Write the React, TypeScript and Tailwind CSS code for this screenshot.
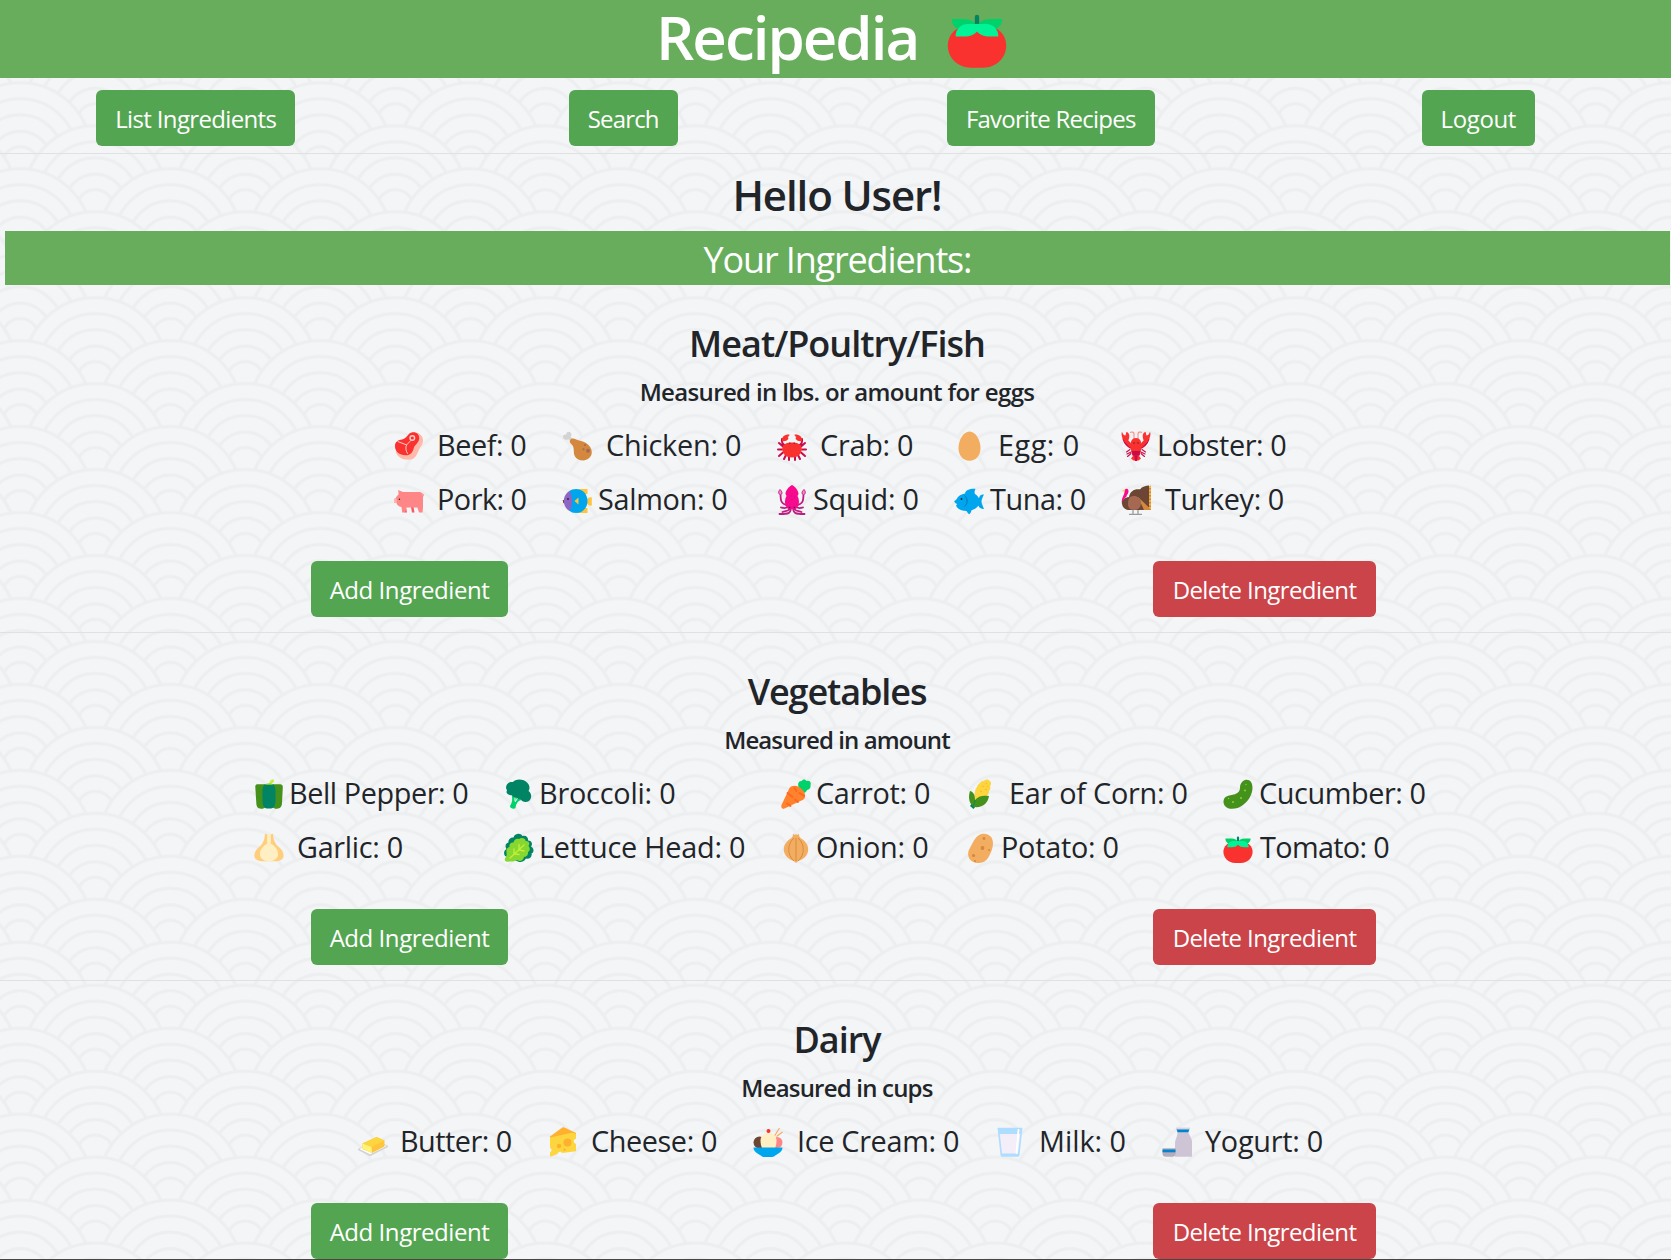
import React from "react";

type Draw = React.ReactNode;

const TOMATO: Draw = (
  <>
    <path d="M.4 18.800C.4 13 5 9.200 9 9.200h12c4 0 8.600 3.800 8.600 9.600C29.600 25 24.500 29.900 18 29.900h-6C5.500 29.900.4 25 .4 18.800Z" fill="#f9312f" />
    <path d="M2.400 5.500h6c3.500 0 5.600 1.500 6.600 4 1-2.500 3.100-4 6.600-4h6C27.600 8.600 25.500 11 21.500 11h-13C4.500 11 2.400 8.600 2.400 5.500Z" fill="#00d26a" />
    <path d="M13.900 4.500a1.100 1.100 0 0 1 2.200 0v6h-2.200Z" fill="#008463" />
    <path d="M4.300 14.200C4.300 10.500 7 8 10.300 8h9.400c3.300 0 6 2.500 6 6.200h-4.400c-3 0-4.800-.8-6.300-2.500-1.500 1.700-3.300 2.500-6.300 2.500Z" fill="#00f397" />
  </>
);

const ICONS: Record<string, Draw> = {
  Tomato: TOMATO,
  Beef: (
    <>
      <path d="M20 1.500c5-.3 8.800 3 9 7.500.2 4-2.300 6.500-4 9.500-1.800 3.300-2.500 10.300-11 10.300-6.500 0-11-3.300-12.200-8C3 12 14 3 20 1.500Z" fill="#ffb9ab" />
      <path d="M18.500 1.300c4-.5 7 2.200 6.700 6.200-.3 4.500-4.500 6.200-5.400 9.500-1 4-3 7.300-8.300 7.300C5.500 24.300.8 20.500 1 15 1.100 10.500 4.500 8.900 8 8.600c5-.6 5.500-6.600 10.500-7.300Z" fill="#f9312f" />
      <path d="M3.700 10.500 12.600 13.900 17 9.300M12.600 13.900c-1.300 2.500-.8 6 1 8.800" fill="none" stroke="#ffcec7" strokeWidth="1" />
      <circle cx="18.300" cy="7" r="2.300" fill="#f9312f" stroke="#ffcec7" strokeWidth="1.400" />
    </>
  ),
  Chicken: (
    <>
      <path d="M1.200 6.700C.2 4.200 3 3 4.300 3.700 3.900.8 7 .1 8.600 1.500c1.600 1.600.8 3.200 0 4.200l2.600 2.800-2.300 2.200-2.500-2.500c-2 1.200-4.600.5-5.200-1.500Z" fill="#d3d3d3" />
      <path d="M8.300 8.800c1-1.300 3.200-1.800 4.800-.8 3 1.500 7 1.600 10.500 3.800 4 2.500 6.200 5.500 6.200 9.500 0 4.500-4 8.200-9 8.200-5.500 0-9-3.500-9-9 0-3.500-.3-5.400-2.500-7.500-1.500-1.200-2-2.700-1-4.200Z" fill="#d3883e" />
      <circle cx="23" cy="14" r="1.100" fill="#a56953" /><circle cx="21.500" cy="18.300" r="1" fill="#a56953" /><circle cx="26" cy="19.700" r="2" fill="#a56953" />
    </>
  ),
  Crab: (
    <>
      <g fill="none" stroke="#ca0b4a" strokeWidth="2" strokeLinecap="round">
        <path d="M6 15.500 2 12M5 18.500H1M6 21.500l-4 3.500M9 24l-2 4M12 25.500v3.500M24 15.500l4-3.500M25 18.500h4M24 21.500l4 3.500M21 24l2 4M18 25.500v3.500M5 8c-.5 3 .5 5.500 3.500 6.500M25 8c.5 3-.5 5.500-3.500 6.500" />
      </g>
      <path d="M5 10.500C4.500 5.500 7.500 3.300 12.500 3.500c0 1.200-.7 2-1.900 2.400 1.200.6.900 2-.1 2.900C9 10.500 7 10 5 10.500ZM25 10.500c.5-5-2.500-7.200-7.500-7 0 1.200.7 2 1.900 2.400-1.200.6-.9 2 .1 2.900 1.500 1.700 3.500 1.200 5.500 1.700Z" fill="#f9312f" />
      <path d="M15 11.500c5.500 0 9.700 1.500 9.700 6.500s-4.200 8.500-9.700 8.500S5.300 23 5.300 18s4.200-6.500 9.700-6.500Z" fill="#f9312f" />
      <circle cx="12.800" cy="12.300" r=".7" fill="#7d1d2c" /><circle cx="17.200" cy="12.300" r=".7" fill="#7d1d2c" />
    </>
  ),
  Egg: <path d="M15.500.5c6 0 11 8.500 11 16.500 0 7.500-4.500 12.700-11 12.700S4.500 24.500 4.500 17C4.500 9 9.500.5 15.500.5Z" fill="#f3ad61" />,
  Lobster: (
    <>
      <g fill="none" stroke="#ca0b4a" strokeWidth="1.100" strokeLinecap="round">
        <path d="M9 18.500 5.500 21M10 21l-4 2M10 22.500l-3.500 3M21 18.500l3.500 2.500M20 21l4 2M20 22.500l3.500 3" />
        <path d="M3 8c1 4 5 8 9 9M27 8c-1 4-5 8-9 9" strokeWidth="3" />
      </g>
      <path d="M13 11V3c0-2-2-2.500-4-1.500M17 11V3c0-2 2-2.500 4-1.500" fill="none" stroke="#ff8b84" strokeWidth="1.100" />
      <path d="M1 .7c1 3 2 3.600 3.500 3.700L5.500.8C8.500 2 9 5.500 7.500 9L5.500 12C2 9.500-.5 5 1 .7ZM29 .7c-1 3-2 3.600-3.500 3.700L24.500.8C21.500 2 21 5.500 22.500 9l2 3C28 9.500 30.500 5 29 .7Z" fill="#f9312f" />
      <path d="m4.500 9 6 6.500M25.500 9l-6 6.500" stroke="#f9312f" strokeWidth="3.600" />
      <path d="M15 7c3.800 0 5.500 3 5.500 7.500 0 5-1.500 8-2.500 10.500l2 2.500-2.500 2h-5l-2.500-2L12 25c-1-2.500-2.500-5.500-2.500-10.500C9.500 10 11.200 7 15 7Z" fill="#f9312f" />
      <path d="M10.500 20h9l-1 4.500h-7Z" fill="#ca0b4a" /><path d="M13.300 24.500h3.400L16 30h-2Z" fill="#ca0b4a" />
      <circle cx="13" cy="12" r=".8" fill="#7d1d2c" /><circle cx="17" cy="12" r=".8" fill="#7d1d2c" />
    </>
  ),
  Pork: (
    <>
      <path d="M9 22h3l1 5.500h-2.500ZM17 22h2.500l1 5.500H18Z" fill="#f9595f" />
      <path d="M4.500 7 4 5l5 2h16.500c2 0 3.500 1.500 3.500 4.500v11l-.5 5h-3.500l-1.500-5h-11l-1.500 5H8.200l-.7-5.500C4.500 21.500 3 20 2.500 18H.5v-4.500h1.200C2 11.500 3.500 10.500 4.500 9.500Z" fill="#ff8687" />
      <path d="M.5 13.500h2.300V18H.5Z" fill="#ffb1a8" /><circle cx="5.400" cy="14.300" r=".8" fill="#222" />
      <path d="M29 11.500c.7-.8.500-2-.3-3" fill="none" stroke="#ff8687" strokeWidth="1" />
    </>
  ),
  Salmon: (
    <>
      <path d="M17 4h8.500v5H22v14h3.500v5H16Z" fill="#ffc43d" /><path d="M25 14.500c1-2 3-2.500 4.800-2v8c-2 .5-4-.500-4.800-2Z" fill="#ffc43d" />
      <path d="M.7 15h2v3.500l-1.500-.5Z" fill="#6d4534" />
      <path d="M7 6.500C9 4.700 11.500 4 14 4c7 0 11.500 5.500 11.500 12S21 28 14 28c-3 0-5-.8-7-2.500Z" fill="#00a6ed" />
      <path d="M7.500 6c3.500 5.500 3.500 14.500 0 20C4 24 1.800 20 1.800 16s2.200-8 5.700-10Z" fill="#8d65c5" />
      <path d="m12.500 16 4-3.500v7Z" fill="#ffc43d" /><circle cx="6" cy="14" r=".9" fill="#222" />
    </>
  ),
  Squid: (
    <>
      <g fill="none" stroke="#bb1d80" strokeWidth="1.800" strokeLinecap="round">
        <path d="M3.500 8c0 8 0 10.500 8.500 13M26.500 8c0 8 0 10.500-8.500 13M12 21c-3 3.500-6 2-8 1.500M18 21c3 3.500 6 2 8 1.500M13 22c-1 5-4 3.500-7.500 5M17 22c1 5 4 3.500 7.500 5M14 22c0 7-3 7-11.500 7M16 22c0 7 3 7 11.500 7" />
      </g>
      <path d="M3.500 10C1.300 8.500 1 7 3 4.500 5.500 7 5.500 8.500 3.500 10ZM26.500 10c2.200-1.500 2.500-3 .5-5.500-2.500 2.500-2.500 4-.5 5.500Z" fill="#f58ac4" stroke="#bb1d80" strokeWidth="1" />
      <path d="M15 0c3.500 2 6.500 5.500 6.500 9L20.500 11c1.800 3 2 8 .4 10.500L19 24h-8l-1.900-2.500C7.500 19 7.700 14 9.500 11L8.500 9c0-3.500 3-7 6.500-9Z" fill="#f70a8d" />
      <g fill="#bb1d80"><circle cx="14.500" cy="11" r=".7" /><circle cx="17.500" cy="12" r=".7" /><circle cx="15" cy="14.500" r=".8" /></g>
      <circle cx="12.600" cy="22.500" r=".8" fill="#321b41" /><circle cx="17.400" cy="22.500" r=".8" fill="#321b41" />
    </>
  ),
  Tuna: (
    <>
      <path d="M11 8.500C12 5 15 3.600 21.500 3.800c-1 2-1.200 3.800-.5 5.200 2.200 1.200 3.400 3 4 4.500 0-2.500 2-4.200 5-4-1.500 3-2.500 5-2.500 7s1.500 5 2.500 7.500c-3 0-5.300-1.500-5.500-3.500-2 2.500-4 4-7 4.800-.5 2-1.300 3.700-2.500 4-1-1-1.800-1.900-2.500-3.300C7.500 26 3.500 24 2 20.500L3.200 19c-1.700-.5-3-2-3-3 .8-.6 1.800-1 2.300-1.800C4 11 7.500 9 11 8.500Z" fill="#00a6ed" />
      <circle cx="7.500" cy="14" r=".9" fill="#212121" /><path d="M10.500 10.500c3.500 3 3.500 8 0 11" fill="none" stroke="#0074ba" strokeWidth="1" />
    </>
  ),
  Turkey: (
    <>
      <path d="M12 23v6M17 23v6M8 29.300h13" stroke="#9b9b9b" strokeWidth="1.300" fill="none" />
      <path d="M18 4.500 30 .5v24.500h-8Z" fill="#d3883e" />
      <path d="M29 1v24" stroke="#ffc43d" strokeWidth="1.500" strokeDasharray="2 1.500" />
      <path d="M8 12c1-6 6-8.500 11-7.500C21 1.500 25 .5 28 .5v22L22 25H7C3 24.500.8 21 .8 17c0-2 3-4.500 7.200-5Z" fill="#6d4534" />
      <path d="M28 22.500 17 12l6 13h7Z" fill="#d3883e" />
      <path d="M9 12c5-2.500 11 0 11 6 0 4-2.500 7-7 7s-6-3-6-6c0-3 .5-5.500 2-7Z" fill="#a56953" />
      <path d="M3.500 5.500C4.500 3 7.500 3.500 7.500 6c0 3-1.500 3-2 5.500L3 14l-2 3C0 13 4 10 3.500 5.500Z" fill="#f70a8d" /><path d="m3.700 4.500-2.500 1.500 2.500 1Z" fill="#ffc43d" />
    </>
  ),
  "Bell Pepper": (
    <>
      <path d="M12.500 5.500c2 0 3.200-1 3.700-2.700S17.500.8 19.300.7l.5 2c-2 .5-1.500 2.300-3.800 3Z" fill="#c3ef3c" stroke="#c3ef3c" strokeWidth=".6" />
      <path d="M1.300 8C1 5.300 3 5 5 5.200h20c2 0 4 .3 3.800 3L28 24c-.2 4-2 5.700-5 5.700-2.500 0-3.500-.7-4.500-1.500h-7c-1 .8-2 1.500-4.500 1.500-3 0-4.500-1.700-4.700-5.700Z" fill="#44911b" />
      <path d="M10.500 5.500h9c1 1.500 2 3 2 7v9c0 5-2 8-4.300 8h-4.400c-2.300 0-4.300-3-4.300-8v-9c0-4 1-5.500 2-7Z" fill="#008463" /><path d="M11 5.700c1.500-1.500 6.500-1.500 8 0Z" fill="#86d72f" />
    </>
  ),
  Broccoli: (
    <>
      <path d="M6 27c3-5 2-7 2-11h11l-1 5c-4 0-6 4-6.500 8-1 1.700-6 .5-5.500-2Z" fill="#00d26a" /><path d="M11 15v7M15 17l-4 6" stroke="#f4f5f7" strokeWidth="1" />
      <path d="M2 9C2 5 5 2.500 9 3c2-3.500 11-3.500 14 .5 3 3 3 6 1.500 8.500 3.500 2.500 3.500 7.500.5 10-3 2-7 1-8.500-2-1 .5-3 0-3.700-1.500-2 .5-3.800-.3-4.500-2C3.500 16 1.500 14 3 11.500Z" fill="#008463" />
    </>
  ),
  Carrot: (
    <>
      <path d="M17.500 8c-1-3 0-6 3-6 1.500-2.300 4-2 5 0 3-1 5 1 4 4 .5 3-1 5-3.500 5-1 3-4 4-7 2Z" fill="#00d26a" />
      <path d="M8.500 9c3-4 10-2.500 14 3 2.500 4 2 7-1 9L3.500 29.500c-3 .8-3.500-1-3-3.500Z" fill="#ff822d" />
      <path d="m6.500 14 5 4M13.500 9l2 3M23 17l-4.500-3M6 24.500l3.500 2.500M14 20.500l3 2.500" fill="none" stroke="#ff6723" strokeWidth="1.900" strokeLinecap="round" />
    </>
  ),
  "Ear of Corn": (
    <>
      <path d="m6 24 4 3-2.500 3L4 27Z" fill="#008463" />
      <path d="M14 4c1-2 3-2 4-2 1-2 5-2 5.500 0 2 .5 2 4 .5 5 1 2 0 4-1 5 0 3-1.500 4-2.500 5l-6 7-6-4c0-5 .5-10 2.500-12 .5-2 1.500-3 3-4Z" fill="#fcd53f" />
      <path d="m16 7 2 1M20 4l1 1M19 10l2 1M14 12l2 1M21 7l1 1" stroke="#ffb92e" strokeWidth="1.300" />
      <path d="M4 12c4 1.500 5 4 5 9 3-4 8-5 14-4-1 7-6 12-15 11-5-3-6-10-4-16Z" fill="#44911b" /><path d="M9 21c0 2-.5 4-2 6" stroke="#008463" strokeWidth=".8" fill="none" />
    </>
  ),
  Cucumber: (
    <>
      <path d="M19.500 2.500C22 0 26 0 28 3c2.500 4 1.500 10-.5 14-3 6-8 10-13 12-5 1.500-10 1-12.500-2-2.500-3.500-1.800-8 1.500-9.500C8 15.500 17 16 17 9c0-3 .5-4.500 2.500-6.500Z" fill="#44911b" />
      <g fill="#86d72f"><circle cx="22" cy="11.500" r="1" /><circle cx="23" cy="5.500" r=".7" /><circle cx="18" cy="19" r="1" /><circle cx="10" cy="23" r="1" /><circle cx="5.500" cy="19.500" r=".7" /></g>
    </>
  ),
  Garlic: (
    <>
      <path d="M11 .7c2 .7 6 .7 8 0 .5 6 1.500 9 5 12.500 3 2.500 5.600 5 5.600 9.500 0 4-4 5.500-9 5.500H9.500c-5 0-9.100-1.500-9.100-5.500 0-4.500 2.600-7 5.600-9.500C9.500 9.700 10.500 6.700 11 .7Z" fill="#ffce7c" />
      <path d="M13.200 1h3.600v9.500c4 2.500 7.200 5.500 7.200 11 0 4-4 6.700-9 6.700s-9-2.700-9-6.700c0-5.500 3.200-8.500 7.200-11Z" fill="#ffefc2" />
    </>
  ),
  "Lettuce Head": (
    <>
      <path d="M1 23c-2-3-.5-6 1.500-7C.5 13 2 10 4.500 9.500 4 6 7 4 9.500 4.500c1-4 7-5 9-1.500 4-1 6 2 5.500 4.500 4 0 5 4 3 6 3.500 2 3 6 .5 7 1 3.500-2.500 6-5.500 5-2.500 4-6 4-8 3Z" fill="#008463" />
      <path d="M2 24c1-2 .5-3 .5-5-.5-3 1-4.500 3-5-.5-3 1.500-5 4-4.500C10 6 13 5 15 6c2-2 7-1 6.500 2 4 0 4.500 3 3 5 2 2 1.500 5-.5 6 .5 4-2.500 5-4 5-1 4-4 5-7 3-3 2-6 1.500-8 1.500-4 1.500-5.500-2-3-4.500Z" fill="#86d72f" />
      <path d="M6 25 20 12M10 16v5l5 .5M15 11.500v5.500l5 1" fill="none" stroke="#c3ef3c" strokeWidth="1.300" strokeLinecap="round" />
    </>
  ),
  Onion: (
    <>
      <path d="M12 .5c1 1.500 2 2 3 .2 1 1.800 2 1.300 3-.2 0 3 .5 4 3 5.500 3.500 2.500 6.200 6 6.200 10.500 0 6-5 10-10 11.500L15 30l-2.200-2C8 26.500 2.800 22.500 2.800 16.500c0-4.500 2.700-8 6.200-10.500 2.500-1.500 3-2.500 3-5.500Z" fill="#f3ad61" />
      <path d="M13 5C6 11 6 22 13 28M17 5c7 6 7 17 0 23M15 5v23" fill="none" stroke="#d3883e" strokeWidth=".9" />
    </>
  ),
  Potato: (
    <>
      <path d="M13 2c4-2.500 10-1.500 12.500 2.500 2.500 4.500 1.500 10-.5 14.500-1.500 3.500-3 7-6.500 9.500-4.500 2.500-11 2-14.500-2C.5 21.500 2.500 17 5 13c2-4 4-8.500 8-11Z" fill="#f3ad61" />
      <g fill="#d3883e"><circle cx="18" cy="5.500" r="1.400" /><circle cx="16.500" cy="15" r="1.900" /><circle cx="23" cy="17" r="1" /><circle cx="7.500" cy="22.500" r="1.600" /><circle cx="9" cy="28" r="1" /></g>
    </>
  ),
  Butter: (
    <>
      <path d="m0 23 12 6.200L30 20v-1.300L17 13 0 22Z" fill="#d3d3d3" /><path d="m1.500 22 10.700 5.300L28.500 19 17 14Z" fill="#fff" />
      <path d="m4.500 16.500 14-6.500 8 3.500v6L14 26l-9.500-4Z" fill="#ffc43d" /><path d="m4.500 16.500 14-6.500 8 3.500L13.500 20Z" fill="#fcd53f" /><path d="m4.500 16.500 9 3.500.5 6-9.500-4.500Z" fill="#fff478" />
    </>
  ),
  Cheese: (
    <>
      <path d="M2 9.500 14 .8c1-.7 2-.5 3 0L28 6v4L2 11Z" fill="#ffb02e" />
      <path d="M2 10.500 24 5.800c2.500 0 3.700.7 4 2v4c-3 .5-3 4.500 0 5v7.400L14 26c-1-2-4-1.500-4.500.8L3.500 29.500c-1 .3-1.500-.3-1.500-1v-3c2-1 2-4 0-4.500Z" fill="#fcd53f" />
      <circle cx="19.500" cy="15.500" r="4" fill="#ffb02e" /><circle cx="11" cy="19" r="2.200" fill="#ffb02e" /><circle cx="16.500" cy="22.800" r="1.200" fill="#ffb02e" />
    </>
  ),
  "Ice Cream": (
    <>
      <path d="m21.500 9 5-8M23.500 9.500l6-4.500" stroke="#f3ad61" strokeWidth="1.200" />
      <circle cx="6.500" cy="15.500" r="6" fill="#6d4534" /><circle cx="24" cy="15.500" r="5.500" fill="#ff8687" />
      <path d="M7.500 13.500c0-10 16-10 16 0 0 3-.5 5-1.500 7.500H9c-1-2.500-1.500-4.500-1.500-7.500Z" fill="#ffefc2" /><circle cx="15.500" cy="4" r="2" fill="#f9312f" />
      <path d="M.5 20.500h29c0 4-4 6-6.500 7.500-1.500 1.200-2.500 2-4 2h-8c-1.500 0-2.500-.8-4-2C4.500 26.500.5 24.500.5 20.500Z" fill="#00a6ed" />
    </>
  ),
  Milk: (
    <>
      <path d="M2.500.7h25L24.500 28c-.2 1.300-1 1.800-2 1.800h-15c-1 0-1.800-.5-2-1.800Z" fill="#aeddff" />
      <path d="M4.800 7h20.400L23 26.500H7Z" fill="#f3eef8" /><path d="M23.500 3 21.500 26" stroke="#fff" strokeWidth="1.900" strokeLinecap="round" />
    </>
  ),
  Yogurt: (
    <>
      <path d="M14.500 2h12v4l2.500 5c1 2 1.200 3.500 1.200 6v12.700H13V17c0-4.500 2-6 2.500-11Z" fill="#cdc4d6" /><path d="M14.500 2.300h13l-1.200 3h-10.600Z" fill="#0084ce" /><path d="M14 .6h14v1.700H14Z" fill="#d9d3df" />
      <path d="M.5 21.300h13v5c0 2.500-1 3.500-3.500 3.500H4c-2.500 0-3.500-1-3.500-3.500Z" fill="#b4acbc" /><path d="M.5 22.500h13v2.800H.5Z" fill="#0084ce" />
    </>
  ),
};

/* Overlapping wave scales repeated behind the page. */
const RINGS = [
  [71, 71],
  [57, 73],
  [43, 75],
  [31, 79.5],
  [18.5, 82.5],
];
const SCALES = [
  [0, -86], [150, -86], [75, -43], [0, 0], [150, 0], [75, 43], [0, 86], [150, 86],
];
function Waves() {
  return (
    <svg className="absolute inset-0 -z-10 h-full w-full" aria-hidden="true">
      <defs>
        <pattern id="waves" width="150" height="85.95" patternUnits="userSpaceOnUse" x="20.3" y="168.7">
          {SCALES.map(([x, y], i) => (
            <g key={i} fill="#f4f5f7" stroke="#edeef0" strokeWidth="3">
              {RINGS.map(([r, cy]) => (
                <circle key={r} cx={x} cy={y + cy} r={r} />
              ))}
            </g>
          ))}
        </pattern>
      </defs>
      <rect width="100%" height="100%" fill="url(#waves)" />
    </svg>
  );
}

function Button({ children, className }: { children: React.ReactNode; className: string }) {
  return (
    <button className={`h-14 rounded-[6px] pt-px text-center text-2xl whitespace-nowrap text-white ${className}`}>
      {children}
    </button>
  );
}

type Item = { name: string; col: string; gap: string; track: string };

const MEAT: Item[][] = [
  [
    { name: "Beef", col: "w-[168px]", gap: "ml-[13px]", track: "tracking-[-0.4px]" },
    { name: "Chicken", col: "w-[215px]", gap: "ml-[14px]", track: "tracking-[-0.2px]" },
    { name: "Crab", col: "w-[177px]", gap: "ml-[13px]", track: "tracking-[-0.25px]" },
    { name: "Egg", col: "w-[167px]", gap: "ml-[14px]", track: "tracking-[0.5px]" },
    { name: "Lobster", col: "w-[170px]", gap: "ml-[6px]", track: "tracking-[-0.4px]" },
  ],
  [
    { name: "Pork", col: "w-[168px]", gap: "ml-[13px]", track: "tracking-[-0.5px]" },
    { name: "Salmon", col: "w-[215px]", gap: "ml-[6px]", track: "tracking-[-0.3px]" },
    { name: "Squid", col: "w-[177px]", gap: "ml-[6px]", track: "tracking-[-0.2px]" },
    { name: "Tuna", col: "w-[167px]", gap: "ml-[6px]", track: "tracking-[-0.4px]" },
    { name: "Turkey", col: "w-[170px]", gap: "ml-[14px]", track: "tracking-[-0.4px]" },
  ],
];
const VEG: Item[][] = [
  [
    { name: "Bell Pepper", col: "w-[250px]", gap: "ml-[5px]", track: "tracking-[-0.4px]" },
    { name: "Broccoli", col: "w-[277px]", gap: "ml-[5px]", track: "tracking-[-0.2px]" },
    { name: "Carrot", col: "w-[185px]", gap: "ml-[5px]", track: "tracking-[-0.3px]" },
    { name: "Ear of Corn", col: "w-[257px]", gap: "ml-[13px]", track: "tracking-[-0.25px]" },
    { name: "Cucumber", col: "w-[210px]", gap: "ml-[6px]", track: "tracking-[-0.4px]" },
  ],
  [
    { name: "Garlic", col: "w-[250px]", gap: "ml-[13px]", track: "tracking-[-0.3px]" },
    { name: "Lettuce Head", col: "w-[277px]", gap: "ml-[5px]", track: "tracking-[-0.2px]" },
    { name: "Onion", col: "w-[185px]", gap: "ml-[5px]", track: "tracking-[-0.15px]" },
    { name: "Potato", col: "w-[257px]", gap: "ml-[5px]", track: "tracking-[-0.25px]" },
    { name: "Tomato", col: "w-[210px]", gap: "ml-[7px]", track: "tracking-[-0.65px]" },
  ],
];
const DAIRY: Item[][] = [
  [
    { name: "Butter", col: "w-[190px]", gap: "ml-[12px]", track: "tracking-[-0.5px]" },
    { name: "Cheese", col: "w-[205px]", gap: "ml-[13px]", track: "tracking-[-0.4px]" },
    { name: "Ice Cream", col: "w-[242px]", gap: "ml-[14px]", track: "tracking-[-0.3px]" },
    { name: "Milk", col: "w-[167px]", gap: "ml-[14px]", track: "tracking-[0px]" },
    { name: "Yogurt", col: "w-[170px]", gap: "ml-[13px]", track: "tracking-[-0.25px]" },
  ],
];

type SectionProps = { title: string; note: string; rows: Item[][]; indent: string; titleTrack: string; noteTrack: string };

function Section({ title, note, rows, indent, titleTrack, noteTrack }: SectionProps) {
  return (
    <section className="border-b border-[#dfe1e3] pt-[34px] pb-[15px]">
      <h3 className={`h-[49px] w-[1674px] text-center text-4xl leading-[50px] font-semibold ${titleTrack}`}>{title}</h3>
      <h5 className={`h-12 w-[1674px] text-center text-2xl leading-12 font-semibold ${noteTrack}`}>{note}</h5>
      <div className={`mt-[3px] ${indent}`}>
        {rows.map((row, i) => (
          <div key={i} className="flex h-[54px] items-center">
            {row.map((it) => (
              <div key={it.name} className={`flex shrink-0 items-center ${it.col}`}>
                <svg viewBox="0 0 30 30" className="size-[30px] shrink-0">{ICONS[it.name]}</svg>
                <span className={`pb-[2px] text-[28.8px] leading-10 whitespace-nowrap ${it.gap} ${it.track}`}>{it.name}: 0</span>
              </div>
            ))}
          </div>
        ))}
      </div>
      <div className="mt-[34px] -ml-[18px] grid w-[1710px] grid-cols-2 justify-items-center">
        <Button className="w-[197px] bg-[#54a551] tracking-[-0.45px]">Add Ingredient</Button>
        <Button className="w-[223px] bg-[#cb444a] tracking-[-0.6px]">Delete Ingredient</Button>
      </div>
    </section>
  );
}

export default function App() {
  return (
    <div className="relative isolate h-[1260px] w-[1671px] overflow-hidden border-b border-[#4a4540] bg-[#f4f5f7] font-['Open_Sans','Noto_Sans',sans-serif] text-[#212529]">
      <Waves />
      <header className="flex h-[78px] items-start bg-[#68ad5c] pl-[656px]">
        <h1 className="h-[78px] w-[291px] text-[60px] leading-[74px] font-semibold tracking-[-2px] whitespace-nowrap text-white">Recipedia</h1>
        <svg viewBox="0 0 30 30" className="mt-2 size-[60px]">{TOMATO}</svg>
      </header>
      <nav className="-ml-[18px] grid h-[75px] w-[1710px] grid-cols-4 justify-items-center pt-3">
        <Button className="w-[199px] bg-[#54a551] tracking-[-0.65px]">List Ingredients</Button>
        <Button className="w-[109px] bg-[#54a551] tracking-[-0.85px]">Search</Button>
        <Button className="w-[208px] bg-[#54a551] tracking-[-0.75px]">Favorite Recipes</Button>
        <Button className="w-[113px] bg-[#54a551] tracking-[-0.4px]">Logout</Button>
      </nav>
      <div className="h-px bg-[#dfe1e3]" />
      <h2 className="h-[77px] w-[1674px] pt-[16px] text-center text-[42px] leading-[50px] font-semibold tracking-[-1.1px]">Hello User!</h2>
      <div className="ml-[5px] h-[54px] w-[1665px] bg-[#68ad5c] pt-[4px] text-center text-4xl leading-[50px] tracking-[-1.15px] text-white">
        Your Ingredients:
      </div>
      <Section title="Meat/Poultry/Fish" note="Measured in lbs. or amount for eggs" rows={MEAT} indent="pl-[394px]" titleTrack="tracking-[-1px]" noteTrack="tracking-[-0.65px]" />
      <Section title="Vegetables" note="Measured in amount" rows={VEG} indent="pl-[254px]" titleTrack="tracking-[-1.1px]" noteTrack="tracking-[-0.9px]" />
      <Section title="Dairy" note="Measured in cups" rows={DAIRY} indent="pl-[358px]" titleTrack="tracking-[-1px]" noteTrack="tracking-[-0.8px]" />
    </div>
  );
}
